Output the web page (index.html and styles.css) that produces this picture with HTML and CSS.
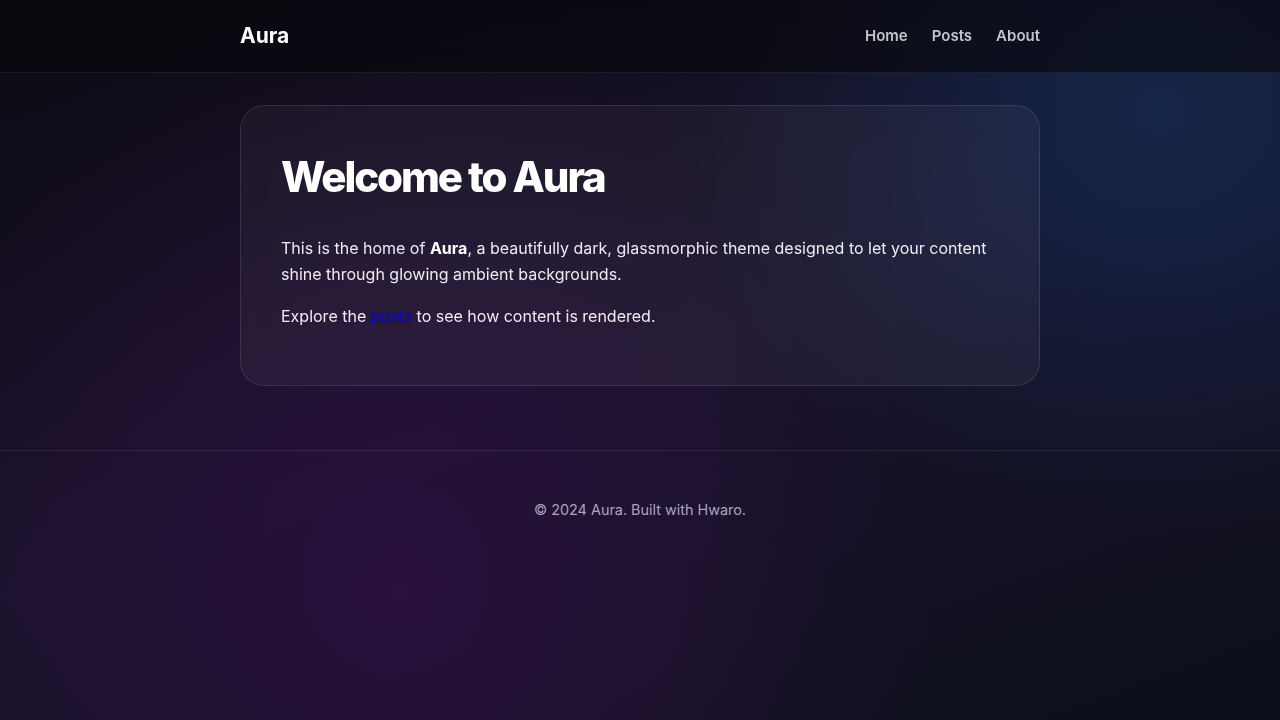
FILE: index.html
```html
<!DOCTYPE html>
<html lang="en">
<head>
  <meta charset="UTF-8" />
  <meta name="viewport" content="width=device-width, initial-scale=1.0" />
  <title>Aura</title>
  <link rel="stylesheet" href="styles.css">
</head>
<body>

  <!-- Header -->
  <header class="site-header">
    <div class="container header-inner">
      <a class="logo" href="/">Aura</a>
      <nav class="nav">
        <a href="/">Home</a>
        <a href="/posts/">Posts</a>
        <a href="/about/">About</a>
      </nav>
    </div>
  </header>

  <!-- Main content -->
  <main class="container main">
    <article class="glass-card">
      <h1>Welcome to Aura</h1>
      <p>This is the home of <strong>Aura</strong>, a beautifully dark, glassmorphic theme designed to let your content shine through glowing ambient backgrounds.</p>
      <p>Explore the <a href="/posts/">posts</a> to see how content is rendered.</p>
    </article>
  </main>

  <footer class="site-footer">
    <p>&copy; 2024 Aura. Built with Hwaro.</p>
  </footer>

</body>
</html>
```

FILE: styles.css
```css
* {
  box-sizing: border-box;
}

html, body {
  margin: 0;
  padding: 0;
  min-height: 100%;
}

/* Ambient glow: purple bottom-left, blue top-right */
body {
  font-family: Inter, 'Noto Sans', sans-serif;
  color: #ececf1;
  background-color: #0c0c14;
  background-image:
    radial-gradient(ellipse 680px 700px at 400px 590px, rgba(42, 18, 62, 0.95), rgba(42, 18, 62, 0) 78%),
    radial-gradient(ellipse 620px 540px at 1160px 110px, rgba(21, 40, 76, 0.9), rgba(21, 40, 76, 0) 78%),
    linear-gradient(160deg, #0e0a14 0%, #18122a 50%, #0c0f1a 100%);
  min-height: 720px;
}

.container {
  max-width: 800px;
  margin: 0 auto;
}

/* Header */
.site-header {
  height: 73px;
  border-bottom: 1px solid rgba(255, 255, 255, 0.08);
  background: rgba(6, 6, 10, 0.6);
  backdrop-filter: blur(12px);
}

.header-inner {
  height: 72px;
  display: flex;
  align-items: center;
  justify-content: space-between;
}

.logo {
  font-size: 21px;
  font-weight: 700;
  color: #fff;
  text-decoration: none;
  margin-top: -1px;
}

.nav {
  display: flex;
  gap: 24px;
  margin-top: -1px;
}

.nav a {
  color: #c4c4cc;
  font-size: 15px;
  font-weight: 600;
  text-decoration: none;
}

/* Glass card */
.main {
  padding: 32px 0 64px;
}

.glass-card {
  background: rgba(255, 255, 255, 0.045);
  border: 1px solid rgba(255, 255, 255, 0.1);
  border-radius: 24px;
  padding: 40px;
  backdrop-filter: blur(16px);
}

.glass-card h1 {
  margin: 0 0 27px;
  font-size: 42px;
  line-height: 62px;
  font-weight: 800;
  letter-spacing: -0.05em;
  color: #fff;
}

.glass-card p {
  margin: 0 0 16px;
  font-size: 16px;
  line-height: 26px;
  color: #ececf1;
}

.glass-card strong {
  color: #fff;
  font-weight: 700;
}

.glass-card a {
  color: #0000ee;
}

/* Footer */
.site-footer {
  border-top: 1px solid rgba(255, 255, 255, 0.08);
  padding: 48px 0;
  text-align: center;
}

.site-footer p {
  margin: 0;
  font-size: 14.4px;
  line-height: 22px;
  color: #a9a5b8;
}
```
